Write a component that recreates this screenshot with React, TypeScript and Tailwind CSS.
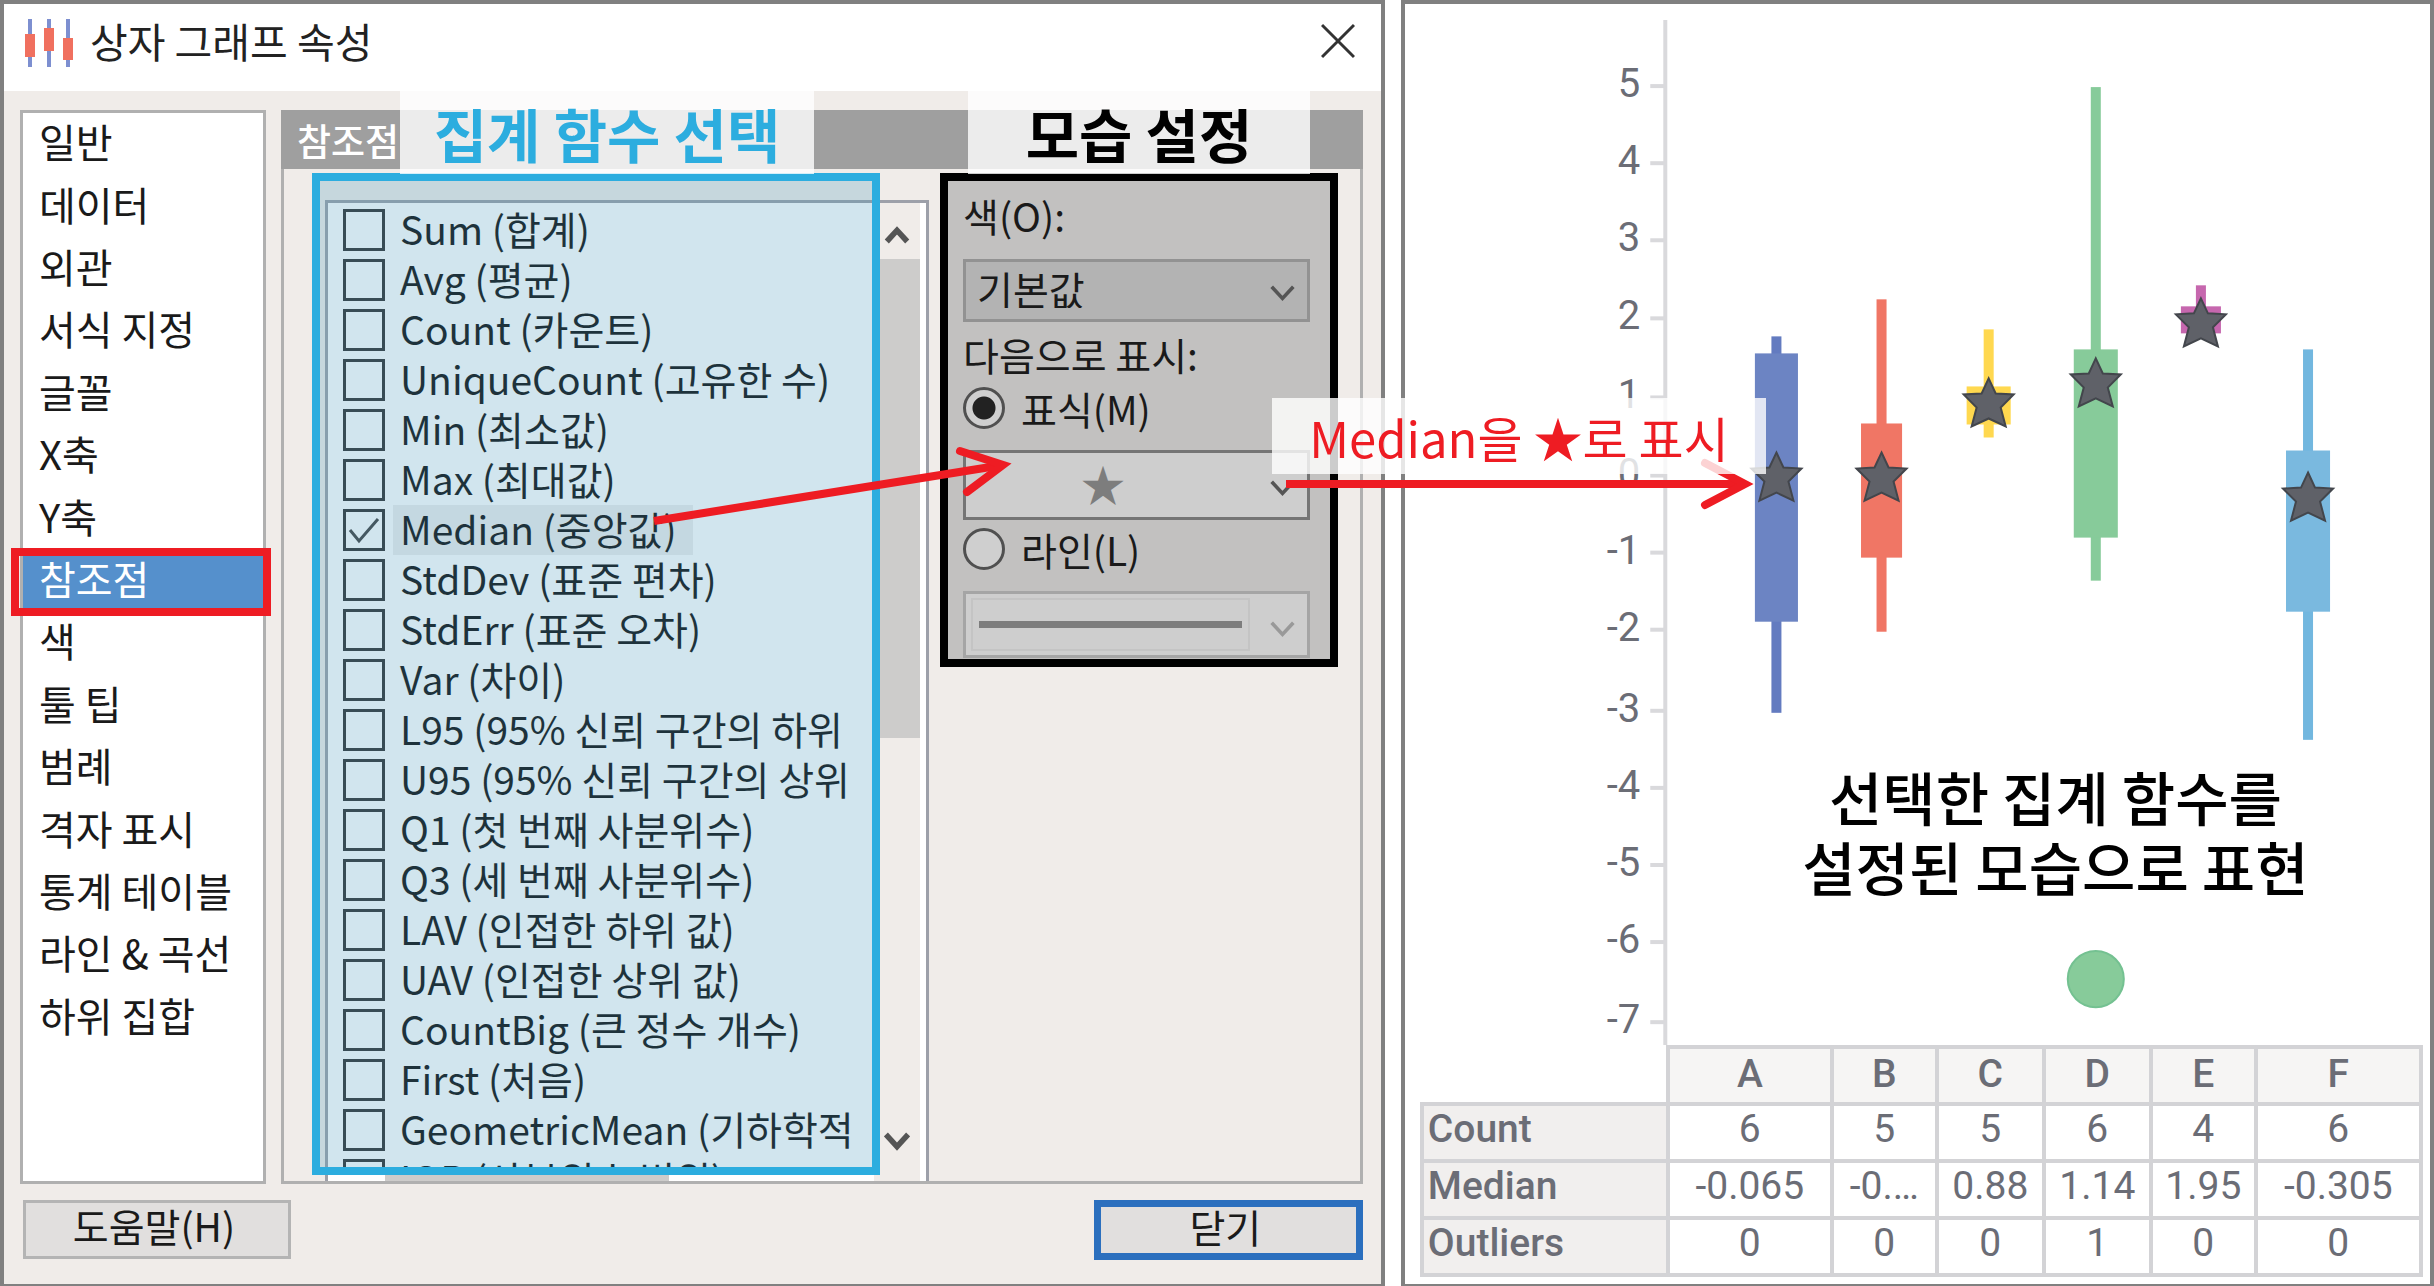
import { useState } from "react";
import type { ReactNode } from "react";

const pages = [
  "일반",
  "데이터",
  "외관",
  "서식 지정",
  "글꼴",
  "X축",
  "Y축",
  "참조점",
  "색",
  "툴 팁",
  "범례",
  "격자 표시",
  "통계 테이블",
  "라인 & 곡선",
  "하위 집합",
];

const measures = [
  "Sum (합계)",
  "Avg (평균)",
  "Count (카운트)",
  "UniqueCount (고유한 수)",
  "Min (최소값)",
  "Max (최대값)",
  "Median (중앙값)",
  "StdDev (표준 편차)",
  "StdErr (표준 오차)",
  "Var (차이)",
  "L95 (95% 신뢰 구간의 하위",
  "U95 (95% 신뢰 구간의 상위",
  "Q1 (첫 번째 사분위수)",
  "Q3 (세 번째 사분위수)",
  "LAV (인접한 하위 값)",
  "UAV (인접한 상위 값)",
  "CountBig (큰 정수 개수)",
  "First (처음)",
  "GeometricMean (기하학적",
  "IQR (사분위수 범위)",
];

const ticks = [
  { label: "5", y: 82 },
  { label: "4", y: 159 },
  { label: "3", y: 236 },
  { label: "2", y: 314 },
  { label: "1", y: 393 },
  { label: "0", y: 471 },
  { label: "-1", y: 548 },
  { label: "-2", y: 625 },
  { label: "-3", y: 706 },
  { label: "-4", y: 783 },
  { label: "-5", y: 860 },
  { label: "-6", y: 937 },
  { label: "-7", y: 1017 },
];

const boxes = [
  { id: "A", x: 371, w: 43, color: "#6c84c3", line: "#637bc0", high: 332, low: 708, top: 349, bottom: 617, star: 446 },
  { id: "B", x: 476, w: 41, color: "#f07665", line: "#f07665", high: 295, low: 627, top: 419, bottom: 553, star: 446 },
  { id: "C", x: 583, w: 44, color: "#ffd84f", line: "#ffd84f", high: 325, low: 433, top: 382, bottom: 420, star: 372 },
  { id: "D", x: 690, w: 44, color: "#87cb9a", line: "#87cb9a", high: 83, low: 576, top: 345, bottom: 533, star: 352 },
  { id: "E", x: 795, w: 40, color: "#c667ae", line: "#c667ae", high: 281, low: 329, top: 302, bottom: 329, star: 292 },
  { id: "F", x: 902, w: 44, color: "#7ab9df", line: "#72b7df", high: 345, low: 735, top: 446, bottom: 607, star: 466 },
];

const stats = [
  { name: "Count", values: ["6", "5", "5", "6", "4", "6"] },
  { name: "Median", values: ["-0.065", "-0.…", "0.88", "1.14", "1.95", "-0.305"] },
  { name: "Outliers", values: ["0", "0", "0", "1", "0", "0"] },
];

function Chevron({ className, up = false, bold = false }: { className?: string; up?: boolean; bold?: boolean }) {
  return (
    <svg viewBox="0 0 28 20" className={className} fill="none" stroke="currentColor" strokeWidth={bold ? 6 : 4} aria-hidden="true">
      <path d={up ? "M3 17 L14 5 L25 17" : "M2 3 L14 16 L26 3"} />
    </svg>
  );
}

function Caption({ children, className }: { children: ReactNode; className: string }) {
  return (
    <div className={`absolute flex items-center justify-center bg-white/80 font-bold text-[58px] leading-none whitespace-nowrap ${className}`}>
      {children}
    </div>
  );
}

function TitleBar() {
  return (
    <header className="flex h-[87px] items-start justify-between bg-white pl-[20px] pr-[26px]">
      <div className="flex items-start gap-4">
        <svg viewBox="0 0 50 48" className="mt-[15px] h-[48px] w-[50px]" aria-hidden="true">
          <g fill="#7d8fd0">
            <rect x="4" width="4" height="48" />
            <rect x="23" width="4" height="48" />
            <rect x="42" width="4" height="48" />
          </g>
          <g fill="#f0705f">
            <rect x="1" y="15" width="10" height="23" />
            <rect x="20" y="9" width="10" height="23" />
            <rect x="39" y="19" width="10" height="22" />
          </g>
        </svg>
        <h1 className="mt-[5px] text-[41px] leading-[62px] text-[#222]">상자 그래프 속성</h1>
      </div>
      <button type="button" aria-label="닫기" className="mt-[19px] text-[#333]">
        <svg viewBox="0 0 34 36" className="h-[36px] w-[34px]" stroke="currentColor" strokeWidth="3" aria-hidden="true">
          <path d="M1 2 L33 34 M33 2 L1 34" />
        </svg>
      </button>
    </header>
  );
}

function PageList({ page, onSelect }: { page: string; onSelect: (p: string) => void }) {
  return (
    <nav className="w-[246px] shrink-0 border-[3px] border-[#b0b0b0] bg-white">
      <ul className="flex h-[936px] flex-col">
        {pages.map((p) => (
          <li key={p} className="relative flex flex-1">
            <button
              type="button"
              onClick={() => onSelect(p)}
              className={`w-full pb-[6px] pl-[16px] text-left text-[40px] leading-none whitespace-nowrap ${
                p === page ? "bg-[#5590cc] text-white" : "text-[#1a1a1a]"
              }`}
            >
              {p}
            </button>
            {p === "참조점" && (
              <span className="pointer-events-none absolute -top-[2px] -bottom-[4px] -left-[12px] -right-[8px] border-8 border-[#ee1c23]" />
            )}
          </li>
        ))}
      </ul>
    </nav>
  );
}

function MeasureList() {
  const [checked, setChecked] = useState(["Median (중앙값)"]);

  const toggle = (m: string) =>
    setChecked((prev) => (prev.includes(m) ? prev.filter((c) => c !== m) : [...prev, m]));

  return (
    <section className="relative w-[617px] shrink-0 pt-[27px] pl-[13px]">
      <div className="flex border-[3px] border-b-0 border-[#9da0a9] bg-white">
        <div className="min-w-0 flex-1">
          <ul className="h-[972px] overflow-hidden pt-[2px] pl-[15px]">
            {measures.map((m) => (
              <li key={m} className="h-[50px]">
                <label className="flex h-[50px] items-center">
                  <input
                    type="checkbox"
                    checked={checked.includes(m)}
                    onChange={() => toggle(m)}
                    className="peer sr-only"
                  />
                  <span className="flex h-[42px] w-[42px] shrink-0 items-center justify-center border-[3px] border-[#333] text-transparent peer-checked:text-[#444]">
                    <svg viewBox="0 0 32 32" className="h-[32px] w-[32px]" fill="none" stroke="currentColor" strokeWidth="3" aria-hidden="true">
                      <path d="M2 16 L11 27 L30 5" />
                    </svg>
                  </span>
                  <span
                    className={`ml-[8px] pr-[16px] pb-[4px] pl-[7px] text-[39px] leading-[46px] whitespace-nowrap text-[#111] ${
                      m.startsWith("Median") ? "bg-[#eee]" : ""
                    }`}
                  >
                    {m}
                  </span>
                </label>
              </li>
            ))}
          </ul>
          <div className="ml-[57px] h-[6px] w-[284px] bg-[#cdcccb]" />
        </div>
        {/* Scrollbar */}
        <div className="mr-[6px] flex w-[46px] flex-col items-center bg-[#f0ece9] text-[#555]">
          <Chevron up bold className="mt-[22px] h-[20px] w-[26px]" />
          <div className="mt-[14px] h-[479px] w-full bg-[#cdcccb]" />
          <Chevron bold className="mt-auto mb-[30px] h-[20px] w-[26px]" />
        </div>
      </div>
      <div className="pointer-events-none absolute top-0 bottom-[6px] left-0 w-[568px] border-8 border-[#2caddf] bg-[#4898bc]/25" />
    </section>
  );
}

function MarkerSettings() {
  return (
    <section className="ml-[11px] flex h-[494px] w-[398px] flex-col border-8 border-black bg-[#c2c1c0] pr-[20px] pl-[15px] text-[39px] text-[#1a1a1a]">
      <label htmlFor="color" className="mt-[6px] leading-[56px]">
        색(O):
      </label>
      <div className="relative mt-[16px]">
        <select
          id="color"
          className="h-[63px] w-full appearance-none border-[3px] border-[#929292] bg-[#b3b3b3] pb-[4px] pl-[11px] leading-none"
        >
          <option>기본값</option>
        </select>
        <Chevron className="pointer-events-none absolute top-[25px] right-[14px] h-[18px] w-[27px] text-[#555]" />
      </div>
      <p className="mt-[4px] leading-[56px]">다음으로 표시:</p>
      <label className="mt-[2px] flex items-center gap-[16px] leading-[48px]">
        <input
          type="radio"
          name="show"
          defaultChecked
          className="h-[42px] w-[42px] appearance-none rounded-full border-[3px] border-[#505050] bg-[#cfcfcf] checked:bg-[radial-gradient(circle,#222_0_11px,#cfcfcf_12px)]"
        />
        표식(M)
      </label>
      <div className="relative mt-[18px]">
        <select
          aria-label="표식"
          className="h-[70px] w-full appearance-none border-[3px] border-[#757575] bg-[#cecece] pb-[4px] pl-[115px] text-[44px] leading-none text-[#7d7d7d]"
        >
          <option>★</option>
        </select>
        <Chevron className="pointer-events-none absolute top-[29px] right-[14px] h-[18px] w-[27px] text-[#555]" />
      </div>
      <label className="mt-[5px] flex items-center gap-[16px] leading-[48px]">
        <input
          type="radio"
          name="show"
          className="h-[42px] w-[42px] appearance-none rounded-full border-[3px] border-[#505050] bg-[#cfcfcf] checked:bg-[radial-gradient(circle,#222_0_11px,#cfcfcf_12px)]"
        />
        라인(L)
      </label>
      <div className="relative mt-[18px]">
        <select aria-label="라인" disabled className="block h-[67px] w-full appearance-none border-[3px] border-[#a5a5a5] bg-[#cecece]">
          <option></option>
        </select>
        <div className="pointer-events-none absolute inset-y-[7px] right-[60px] left-[8px] flex items-center border-2 border-[#c4c4c4] px-[6px]">
          <div className="h-[7px] w-full bg-[#7d7d7d]" />
        </div>
        <Chevron className="pointer-events-none absolute top-[29px] right-[14px] h-[18px] w-[27px] text-[#999]" />
      </div>
    </section>
  );
}

function PropertiesDialog() {
  const [page, setPage] = useState("참조점");

  return (
    <main className="relative flex min-w-0 flex-[1386] flex-col border-4 border-[#808080] bg-[#f0ece9]">
      <TitleBar />
      <div className="flex gap-[15px] pt-[19px] pr-[18px] pl-[16px]">
        <PageList page={page} onSelect={setPage} />
        <div className="min-w-0 flex-1 border-[3px] border-[#b0b0b0]">
          <h2 className="-mx-[3px] -mt-[3px] mb-[4px] h-[59px] bg-[#9f9f9f] pl-[16px] text-[37px] leading-[60px] font-medium text-white">
            참조점
          </h2>
          <div className="flex items-start pl-[28px]">
            <MeasureList />
            <MarkerSettings />
          </div>
        </div>
      </div>
      <footer className="flex justify-between pt-[16px] pr-[18px] pl-[19px] pb-[22px] text-[39px] leading-none text-[#1a1a1a]">
        <button type="button" className="h-[59px] w-[268px] border-[3px] border-[#b4b4b4] bg-[#e1dfde] pr-[6px] pb-[8px]">
          도움말(H)
        </button>
        <button type="button" className="h-[60px] w-[269px] border-[7px] border-[#2b6fbe] bg-[#e1dfde] pb-[8px] pr-[6px]">
          닫기
        </button>
      </footer>

      <Caption className="top-[87px] left-[396px] h-[83px] w-[414px] text-[#2caddf]">집계 함수 선택</Caption>
      <Caption className="top-[87px] left-[964px] h-[83px] w-[342px] text-black">모습 설정</Caption>
    </main>
  );
}

function BoxPlot() {
  return (
    <div className="relative">
      <svg viewBox="0 0 1024 1040" className="block w-full" role="img" aria-label="A–F">
        <line x1="260" x2="260" y1="16" y2="1040" stroke="#d9d9dc" strokeWidth="4" />
        {ticks.map((t) => (
          <g key={t.label}>
            <line x1="245" x2="260" y1={t.y} y2={t.y} stroke="#d9d9dc" strokeWidth="4" />
            <text x="235" y={t.y + 11} textAnchor="end" fontSize="40" fill="#6b6d76" className="font-['Roboto']">
              {t.label}
            </text>
          </g>
        ))}
        {boxes.map((b) => (
          <g key={b.id}>
            <rect x={b.x - 5} y={b.high} width="10" height={b.low - b.high} fill={b.line} />
            <rect x={b.x - b.w / 2} y={b.top} width={b.w} height={b.bottom - b.top} fill={b.color} />
            <path
              transform={`translate(${b.x} ${b.star})`}
              d="M0 2 L7 17 L25 18 L12 31 L17 50 L0 42 L-17 50 L-12 31 L-25 18 L-7 17 Z"
              fill="#5f6168"
              stroke="#43464c"
              strokeWidth="2"
            />
          </g>
        ))}
        <circle cx="690" cy="974" r="28" fill="#87cb9a" stroke="#74c191" strokeWidth="2" />
      </svg>
      <p className="absolute inset-x-0 top-[757px] pl-[276px] text-center text-[58px] leading-[70px] font-medium text-black">
        선택한 집계 함수를
        <br />
        설정된 모습으로 표현
      </p>
    </div>
  );
}

function StatsTable() {
  return (
    <div className="pr-[10px] pl-[15px] pb-[7px]">
      <table className="w-full table-fixed border-collapse font-['Roboto'] text-[39px] leading-[47px] text-[#6b6d76]">
        <colgroup>
          <col className="w-[246px]" />
          <col className="w-[164px]" />
          <col className="w-[105px]" />
          <col className="w-[107px]" />
          <col className="w-[107px]" />
          <col className="w-[105px]" />
          <col className="w-[165px]" />
        </colgroup>
        <thead>
          <tr>
            <td />
            {boxes.map((b) => (
              <th key={b.id} scope="col" className="border-4 border-[#d3d3d6] bg-[#f6f5f4] px-0 pt-[2px] pb-[4px] font-medium">
                {b.id}
              </th>
            ))}
          </tr>
        </thead>
        <tbody>
          {stats.map((s) => (
            <tr key={s.name}>
              <th scope="row" className="border-4 border-[#d3d3d6] bg-[#f1efee] p-0 pb-[6px] pl-[4px] text-left font-medium">
                {s.name}
              </th>
              {s.values.map((v, i) => (
                <td key={i} className="border-4 border-[#d3d3d6] p-0 pb-[6px] text-center">
                  {v}
                </td>
              ))}
            </tr>
          ))}
        </tbody>
      </table>
    </div>
  );
}

export default function App() {
  return (
    <div className="relative flex min-h-screen gap-[16px] overflow-hidden bg-white font-['Noto_Sans_CJK_KR',sans-serif]">
      <PropertiesDialog />
      <aside className="flex min-w-0 flex-[1032] flex-col justify-between border-4 border-[#808080] bg-white">
        <BoxPlot />
        <StatsTable />
      </aside>

      {/* Callout arrows */}
      <svg
        viewBox="0 0 2434 1286"
        className="pointer-events-none absolute top-0 left-0 w-full"
        fill="none"
        stroke="#ee1c23"
        strokeWidth="8"
        aria-hidden="true"
      >
        <path d="M654 521 L1003 465" />
        <path d="M960 451 L1003 465 L967 492" strokeLinecap="round" />
        <path d="M1286 484 L1745 484" />
        <path d="M1705 463 L1745 484 L1705 505" strokeLinecap="round" />
      </svg>
      <p className="absolute top-[398px] left-[1272px] flex h-[76px] w-[494px] items-center justify-center bg-white/80 text-[49px] leading-none whitespace-nowrap text-[#ee1c23]">
        Median을 ★로 표시
      </p>
    </div>
  );
}
